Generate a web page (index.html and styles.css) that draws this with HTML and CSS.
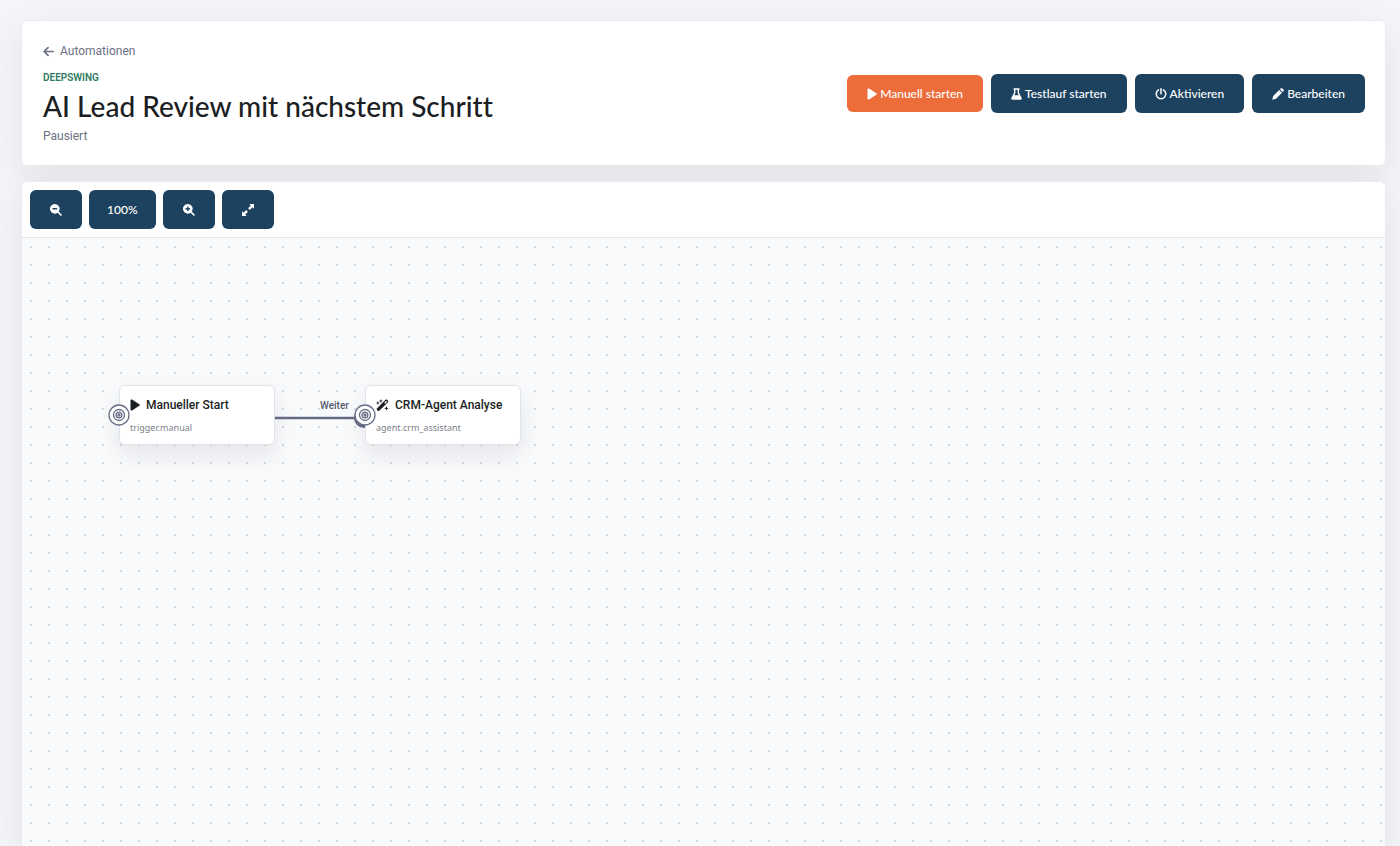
FILE: index.html
```html
<!DOCTYPE html>
<html lang="de">
<head>
<meta charset="utf-8">
<meta name="viewport" content="width=device-width, initial-scale=1">
<title>AI Lead Review mit nächstem Schritt</title>
<link rel="stylesheet" href="styles.css">
</head>
<body>
<main class="page">
  <header class="card header">
    <div class="heading">
      <a class="back" href="#"><svg class="back-icon" viewBox="0 0 12 12" aria-hidden="true"><path d="M11 6H1.5M5.5 1.7 1.2 6l4.3 4.3"/></svg>Automationen</a>
      <p class="brand">DEEPSWING</p>
      <h1 class="title">AI Lead Review mit nächstem Schritt</h1>
      <p class="status">Pausiert</p>
    </div>
    <div class="actions">
      <button class="btn btn-primary" type="button"><svg class="icon icon-play" viewBox="0 0 10 12" aria-hidden="true"><path d="M.5 1.4v9.2c0 .8.8 1.2 1.5.8l7.3-4.6c.6-.4.6-1.2 0-1.6L2 .6C1.3.2.5.6.5 1.4z"/></svg>Manuell starten</button>
      <button class="btn" type="button"><svg class="icon icon-flask" viewBox="0 0 11 12" aria-hidden="true"><path fill-rule="evenodd" d="M2.5.2h6v1.5H8v3l2.7 5.2c.5 1-.1 1.9-1.2 1.9h-8C.4 11.800-.2 10.900.3 9.900L3 4.700v-3h-.5zM4.400 1.700V5L3.300 7.200h4.400L6.600 5V1.700z"/></svg>Testlauf starten</button>
      <button class="btn" type="button"><svg class="icon icon-power" viewBox="0 0 12 12" aria-hidden="true"><path class="stroke" d="M6 .8v5M3.5 1.900a4.800 4.800 0 1 0 5 0"/></svg>Aktivieren</button>
      <button class="btn" type="button"><svg class="icon icon-pencil" viewBox="0 0 12 12" aria-hidden="true"><path d="M7.200 2 10 4.800 4 10.800.2 11.800l1-3.800zM7.900 1.300l.8-.8c.5-.5 1.200-.5 1.700 0l1.100 1.100c.5.5.5 1.200 0 1.700l-.8.8z"/></svg>Bearbeiten</button>
    </div>
  </header>

  <section class="card board">
    <div class="toolbar">
      <button class="btn btn-tool" type="button" aria-label="Verkleinern"><svg class="icon icon-tool" viewBox="0 0 12 12" aria-hidden="true"><path fill-rule="evenodd" d="M4.800 0a4.800 4.800 0 0 1 3.900 7.600L12 10.900 10.900 12 7.600 8.700A4.800 4.800 0 1 1 4.800 0zM2.500 4.100v1.400h4.600V4.100z"/></svg></button>
      <button class="btn btn-zoom" type="button">100%</button>
      <button class="btn btn-tool" type="button" aria-label="Vergrößern"><svg class="icon icon-tool" viewBox="0 0 12 12" aria-hidden="true"><path fill-rule="evenodd" d="M4.800 0a4.800 4.800 0 0 1 3.900 7.600L12 10.900 10.900 12 7.600 8.700A4.800 4.800 0 1 1 4.800 0zM4.100 2.500v1.600H2.500v1.400h1.600v1.600h1.400V5.500h1.600V4.100H5.500V2.500z"/></svg></button>
      <button class="btn btn-tool" type="button" aria-label="Einpassen"><svg class="icon icon-tool" viewBox="0 0 12 12" aria-hidden="true"><path d="M7.300 0H12v4.700l-1.500-1.500-2.700 2.700-1.700-1.700 2.700-2.700zM4.700 12H0V7.300l1.500 1.500 2.700-2.700 1.700 1.700-2.700 2.700z"/></svg></button>
    </div>
    <div class="canvas">
      <svg class="edge" viewBox="0 0 92 24" aria-hidden="true"><path d="M0 12h82"/><circle cx="89" cy="12" r="10"/></svg>
      <span class="edge-label">Weiter</span>
      <article class="node node-start">
        <svg class="port" viewBox="0 0 22 22" aria-hidden="true"><circle class="port-disc" cx="11" cy="11" r="10"/><circle cx="11" cy="11" r="5.5"/><circle cx="11" cy="11" r="2.900"/><circle class="port-dot" cx="11" cy="11" r="1"/></svg>
        <h2 class="node-title"><svg class="icon icon-play" viewBox="0 0 10 12" aria-hidden="true"><path d="M.5 1.400v9.200c0 .8.8 1.200 1.500.8l7.300-4.600c.6-.4.6-1.200 0-1.600L2 .6C1.300.2.5.6.5 1.400z"/></svg>Manueller Start</h2>
        <p class="node-type">trigger.manual</p>
      </article>
      <article class="node node-agent">
        <svg class="port" viewBox="0 0 22 22" aria-hidden="true"><circle class="port-disc" cx="11" cy="11" r="10"/><circle cx="11" cy="11" r="5.5"/><circle cx="11" cy="11" r="2.900"/><circle class="port-dot" cx="11" cy="11" r="1"/></svg>
        <h2 class="node-title"><svg class="icon icon-wand" viewBox="0 0 14 13" aria-hidden="true"><path fill-rule="evenodd" d="M.9 10.200 10.300.8c.5-.5 1.200-.5 1.700 0l.9.9c.5.5.5 1.200 0 1.700l-9.400 9.200c-.5.5-1.200.5-1.700 0l-.9-.9c-.5-.5-.5-1 0-1.500zM8.800 4.200l1 1 2.200-2.200-1-1z"/><path d="m5.300 0 .6 1.500 1.500.6-1.500.6-.6 1.500-.6-1.500-1.500-.6 1.500-.6zM2 2.300l.6 1.500 1.500.6-1.500.6L2 6.500 1.400 5l-1.500-.6 1.500-.6zM11.300 7.700l.7 1.800 1.800.7-1.800.7-.7 1.800-.7-1.800-1.800-.7 1.800-.7z"/></svg>CRM-Agent Analyse</h2>
        <p class="node-type">agent.crm_assistant</p>
      </article>
    </div>
  </section>
</main>
</body>
</html>
```
FILE: styles.css
```css
* {
  box-sizing: border-box;
}

body {
  margin: 0;
  background: #f4f5f9;
  color: #1b1e23;
  font-family: Roboto, "Noto Sans", sans-serif;
  font-variant-ligatures: none;
}

h1,
h2,
p {
  margin: 0;
}

.page {
  display: flex;
  flex-direction: column;
  gap: 15px;
  height: 100vh;
  padding: 20px 14px 0 21px;
  overflow: hidden;
}

.card {
  background: #fff;
  border: 1px solid #e9ebef;
  border-radius: 6px;
  box-shadow: 0 12px 36px rgba(20, 24, 30, 0.08);
}

.header {
  display: flex;
  align-items: center;
  justify-content: space-between;
  gap: 24px;
  padding: 21px 20px 20px 21px;
}

.heading {
  display: flex;
  flex-direction: column;
  align-items: flex-start;
}

.back {
  display: flex;
  align-items: center;
  gap: 6px;
  color: #6c7084;
  font-size: 12px;
  line-height: 18px;
  text-decoration: none;
}

.back-icon {
  width: 11px;
  height: 11px;
  fill: none;
  stroke: currentColor;
  stroke-width: 1.8;
  stroke-linecap: round;
  stroke-linejoin: round;
}

.brand {
  margin-top: 10px;
  color: #2f7b62;
  font-size: 10px;
  font-weight: 600;
  line-height: 16px;
}

.title {
  margin-top: 2px;
  font-family: "Lato Medium", Lato, sans-serif;
  font-size: 28px;
  font-weight: 500;
  line-height: 36px;
}

.status {
  margin-top: 3px;
  color: #6c7084;
  font-size: 12px;
  line-height: 18px;
}

.actions,
.toolbar {
  display: flex;
  align-items: center;
}

.actions {
  gap: 8px;
}

.btn {
  display: inline-flex;
  align-items: center;
  justify-content: center;
  gap: 3px;
  height: 39px;
  padding: 0 20px;
  border: 0;
  border-radius: 6px;
  background: #1d4260;
  color: #fff;
  font-family: "Lato Medium", Lato, sans-serif;
  font-size: 12px;
  font-weight: 600;
  line-height: 18px;
  white-space: nowrap;
}

.btn-primary {
  height: 37px;
  background: #ec6c3a;
}

.icon {
  flex: none;
  width: 12px;
  height: 12px;
  fill: currentColor;
}

.icon-play {
  width: 10px;
}

.icon-flask {
  width: 11px;
}

.icon .stroke {
  fill: none;
  stroke: currentColor;
  stroke-width: 1.5;
  stroke-linecap: round;
}

.board {
  display: flex;
  flex: 1;
  flex-direction: column;
  min-height: 0;
  border-bottom: 0;
  border-radius: 6px 6px 0 0;
}

.toolbar {
  gap: 7px;
  padding: 8px;
  border-bottom: 1px solid #e5e7ec;
}

.btn-tool {
  width: 52px;
}

.btn-zoom {
  padding: 0 18px;
}

.canvas {
  position: relative;
  flex: 1;
  overflow: hidden;
  background: #f9fafc radial-gradient(circle at 9px 9px, #d5d8dd 1px, transparent 1px) 0 0 / 18px 18px;
}

.edge {
  position: absolute;
  top: 168px;
  left: 253px;
  width: 92px;
  height: 24px;
  fill: #686d86;
}

.edge path {
  stroke: #686d86;
  stroke-width: 2.5;
}

.edge-label {
  position: absolute;
  top: 160px;
  left: 298px;
  background: #f9fafc;
  color: #555a6e;
  font-size: 10px;
  font-weight: 500;
  line-height: 16px;
}

.node {
  position: absolute;
  top: 147px;
  width: 156px;
  padding: 10px;
  border: 1px solid #e1e4ea;
  border-radius: 6px;
  background: #fff;
  box-shadow: 0 10px 24px rgba(20, 24, 30, 0.09);
}

.node-start {
  left: 97px;
}

.node-agent {
  left: 343px;
}

.port {
  position: absolute;
  top: 18px;
  left: -12px;
  width: 22px;
  height: 22px;
  fill: none;
  stroke: #686d86;
  stroke-width: 1.3;
}

.port-disc {
  fill: #fff;
}

.node-title {
  display: flex;
  align-items: center;
  gap: 6px;
  font-size: 12px;
  font-weight: 500;
  line-height: 18px;
  white-space: nowrap;
}

.icon-wand {
  width: 13px;
}

.node-type {
  margin-top: 7px;
  color: #7b7f8a;
  font-family: "Noto Sans", sans-serif;
  font-size: 9px;
  line-height: 13px;
}
```
